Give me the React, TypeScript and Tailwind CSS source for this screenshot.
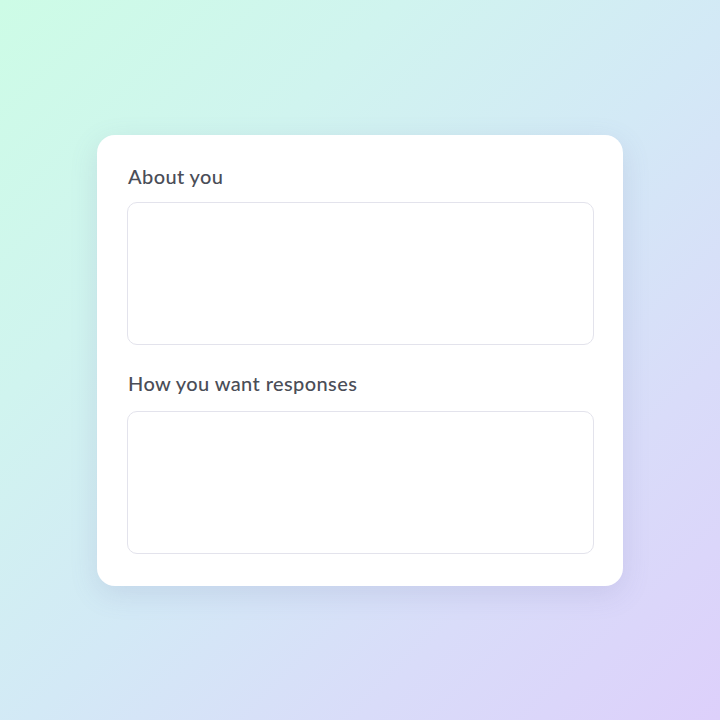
import React from "react";

export default function App() {
  return (
    <div className="w-full h-[720px] flex items-center justify-center bg-[linear-gradient(135deg,#cdfce6_0%,#d0f4ef_28%,#d3e9f6_52%,#d9dcf9_75%,#ddd0fb_100%)]">
      <div
        className="w-[526px] h-[451px] bg-white rounded-[18px] shadow-[0_8px_28px_rgba(110,110,170,0.16)] pl-[30px] pr-[29px] pt-[29px] pb-[32px] flex flex-col"
        style={{ fontFamily: "Lato, 'Noto Sans', sans-serif" }}
      >
        <label className="block text-[20px] leading-[24px] font-medium tracking-[0.4px] text-[#4a4d57] pl-[1px]">About you</label>
        <textarea className="mt-[14px] h-[143px] w-full resize-none rounded-[10px] border border-[#e3e3ec] bg-white outline-none" />
        <label className="block mt-[26px] text-[20px] leading-[24px] font-medium tracking-[0.4px] text-[#4a4d57] pl-[1px]">How you want responses</label>
        <textarea className="mt-[16px] h-[143px] w-full resize-none rounded-[10px] border border-[#e3e3ec] bg-white outline-none" />
      </div>
    </div>
  );
}
